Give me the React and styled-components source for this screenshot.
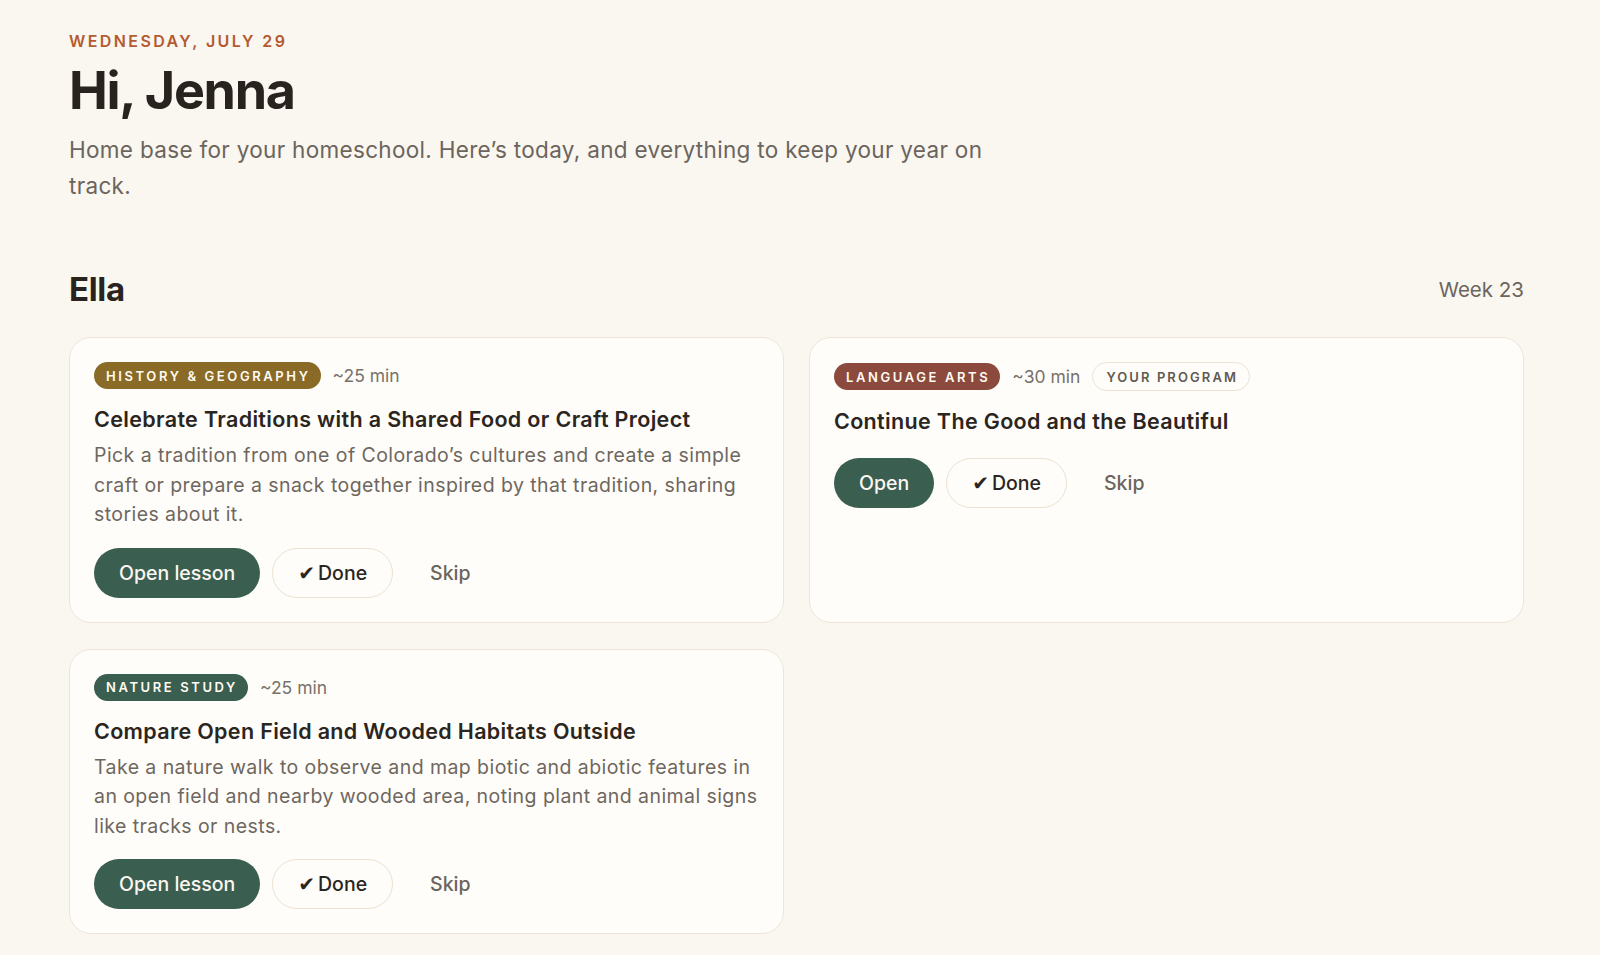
import React from 'react';
import styled, { createGlobalStyle } from 'styled-components';

const GlobalStyle = createGlobalStyle`
  html, body {
    margin: 0;
    padding: 0;
    background: #faf6f0;
  }
  body {
    font-family: Inter, "Noto Sans", "DejaVu Sans", sans-serif;
    color: #2a2520;
    -webkit-font-smoothing: antialiased;
  }
  * {
    box-sizing: border-box;
  }
`;

const lessons = [
  {
    id: 'hist',
    subject: 'History & Geography',
    tone: '#8a6a27',
    minutes: 25,
    title: 'Celebrate Traditions with a Shared Food or Craft Project',
    description:
      'Pick a tradition from one of Colorado’s cultures and create a simple craft or prepare a snack together inspired by that tradition, sharing stories about it.',
    openLabel: 'Open lesson',
  },
  {
    id: 'lang',
    subject: 'Language Arts',
    tone: '#8b4a3d',
    minutes: 30,
    program: true,
    title: 'Continue The Good and the Beautiful',
    openLabel: 'Open',
  },
  {
    id: 'nature',
    subject: 'Nature Study',
    tone: '#3a5e50',
    minutes: 25,
    title: 'Compare Open Field and Wooded Habitats Outside',
    description:
      'Take a nature walk to observe and map biotic and abiotic features in an open field and nearby wooded area, noting plant and animal signs like tracks or nests.',
    openLabel: 'Open lesson',
  },
];

export default function App() {
  return (
    <>
      <GlobalStyle />
      <Page>
        <Greeting>
          <DateLabel>Wednesday, July 29</DateLabel>
          <Hello>Hi, Jenna</Hello>
          <Intro>
            Home base for your homeschool. Here’s today, and everything to keep your year on track.
          </Intro>
        </Greeting>

        <StudentSection>
          <StudentHeader>
            <StudentName>Ella</StudentName>
            <WeekLabel>Week 23</WeekLabel>
          </StudentHeader>

          <LessonGrid>
            {lessons.map((lesson) => (
              <LessonCard key={lesson.id}>
                <MetaRow>
                  <SubjectTag $tone={lesson.tone}>{lesson.subject}</SubjectTag>
                  <Duration>~{lesson.minutes} min</Duration>
                  {lesson.program && <ProgramTag>Your program</ProgramTag>}
                </MetaRow>
                <LessonTitle>{lesson.title}</LessonTitle>
                {lesson.description && <LessonText>{lesson.description}</LessonText>}
                <Actions>
                  <PrimaryButton>{lesson.openLabel}</PrimaryButton>
                  <OutlineButton>
                    <Check>✔</Check>Done
                  </OutlineButton>
                  <GhostButton>Skip</GhostButton>
                </Actions>
              </LessonCard>
            ))}
          </LessonGrid>
        </StudentSection>
      </Page>
    </>
  );
}

const Page = styled.main`
  padding: 31px 76px 40px 69px;
`;

const Greeting = styled.header`
  display: flex;
  flex-direction: column;
`;

const DateLabel = styled.div`
  font-size: 16px;
  line-height: 20px;
  font-weight: 600;
  letter-spacing: 0.15em;
  text-transform: uppercase;
  color: #b35b2f;
`;

const Hello = styled.h1`
  margin: 10px 0 0;
  font-size: 52px;
  line-height: 60px;
  font-weight: 700;
  letter-spacing: -0.025em;
  color: #28231e;
`;

const Intro = styled.p`
  margin: 11px 0 0;
  max-width: 950px;
  font-size: 22.5px;
  line-height: 36px;
  letter-spacing: 0.014em;
  color: #6b655d;
`;

const StudentSection = styled.section`
  margin-top: 65px;
`;

const StudentHeader = styled.div`
  display: flex;
  align-items: center;
  justify-content: space-between;
  height: 40px;
`;

const StudentName = styled.h2`
  margin: 0;
  font-size: 33px;
  font-weight: 700;
  letter-spacing: -0.01em;
  color: #28231e;
`;

const WeekLabel = styled.span`
  font-size: 20.5px;
  color: #6b655d;
`;

const LessonGrid = styled.div`
  margin-top: 28px;
  display: grid;
  grid-template-columns: 1fr 1fr;
  column-gap: 25px;
  row-gap: 26px;
`;

const LessonCard = styled.article`
  display: flex;
  flex-direction: column;
  align-items: flex-start;
  padding: 24px;
  background: #fffdf9;
  border: 1.5px solid #eee5d8;
  border-radius: 22px;
`;

const MetaRow = styled.div`
  display: flex;
  align-items: center;
  gap: 12px;
`;

const SubjectTag = styled.span`
  display: inline-flex;
  align-items: center;
  height: 27px;
  padding: 0 10px 0 12px;
  border-radius: 999px;
  background: ${(p) => p.$tone};
  color: #fffaf2;
  font-size: 13px;
  font-weight: 600;
  letter-spacing: 0.2em;
  text-transform: uppercase;
`;

const ProgramTag = styled.span`
  display: inline-flex;
  align-items: center;
  height: 29px;
  padding: 0 11px 0 13px;
  border-radius: 999px;
  border: 1.5px solid #ebe2d3;
  color: #5f5a52;
  font-size: 13px;
  font-weight: 600;
  letter-spacing: 0.16em;
  text-transform: uppercase;
`;

const Duration = styled.span`
  font-size: 17.5px;
  color: #77716a;
`;

const LessonTitle = styled.h3`
  margin: 16px 0 8px;
  font-size: 21.5px;
  line-height: 28px;
  font-weight: 600;
  letter-spacing: 0.016em;
  color: #2a2520;
`;

const LessonText = styled.p`
  margin: 0 0 3px;
  font-size: 19.5px;
  line-height: 29.5px;
  letter-spacing: 0.022em;
  color: #6e675f;
`;

const Actions = styled.div`
  display: flex;
  align-items: center;
  gap: 12px;
  margin-top: 15px;
`;

const BaseButton = styled.button`
  display: inline-flex;
  align-items: center;
  height: 50px;
  padding: 0 25px;
  border-radius: 999px;
  font-family: inherit;
  font-size: 19.5px;
  font-weight: 500;
  cursor: pointer;
`;

const PrimaryButton = styled(BaseButton)`
  border: none;
  background: #3a5e50;
  color: #fbf7f0;
`;

const OutlineButton = styled(BaseButton)`
  border: 1.5px solid #ebe1d1;
  background: #fffdf9;
  color: #2a2520;
`;

const GhostButton = styled(BaseButton)`
  border: none;
  background: transparent;
  color: #6b655d;
`;

const Check = styled.span`
  margin-right: 3px;
  font-family: "DejaVu Sans", sans-serif;
  font-size: 20px;
`;
